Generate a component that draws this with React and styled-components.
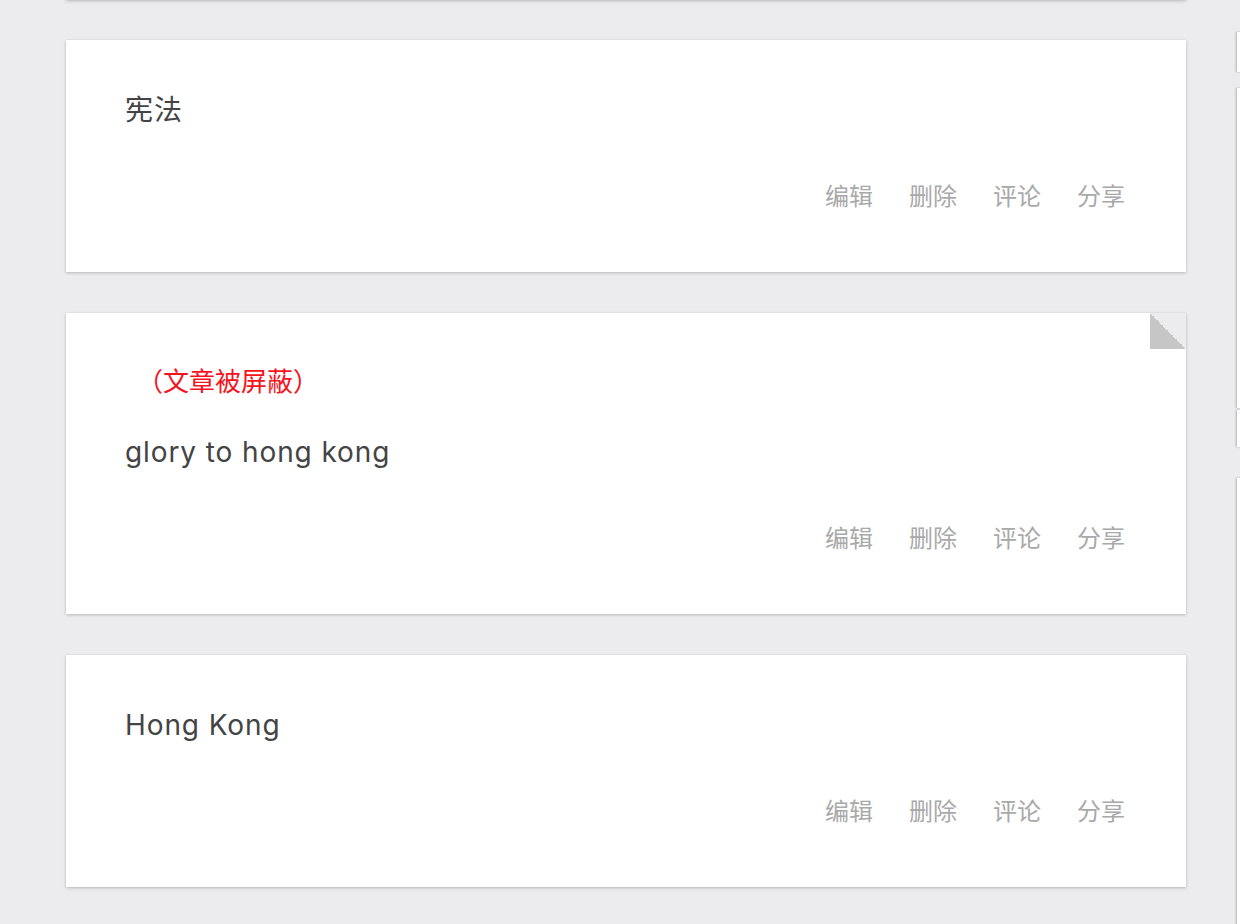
import React from 'react';
import styled, { createGlobalStyle } from 'styled-components';

const GlobalStyle = createGlobalStyle`
    html, body
    {
        margin: 0;
        padding: 0;
        background: #ececee;
        font-family: Inter, "Noto Sans CJK SC", sans-serif;
        overflow: hidden;
    }
`;

const Page = styled.div`
    display: flex;
    align-items: flex-start;
    gap: 51px;
    padding-left: 66px;
    height: 924px;
    overflow: hidden;
`;

const List = styled.div`
    width: 1120px;
    flex-shrink: 0;
    display: flex;
    flex-direction: column;
    gap: 41px;
`;

const Stub = styled.div`
    height: 80px;
    margin-top: -81px;
    background: #fff;
    box-shadow: 0 1px 4px rgba(0, 0, 0, 0.35);
`;

const Card = styled.div`
    position: relative;
    background: #fff;
    padding: 49px 61px 57px 59px;
    box-shadow: 0 1px 3px rgba(0, 0, 0, 0.22), 0 0 1px rgba(0, 0, 0, 0.08);
`;

const Fold = styled.div`
    position: absolute;
    top: 0;
    right: 0;
    width: 36px;
    height: 36px;
    background: linear-gradient(to bottom left, #ececee 50%, #c6c6c6 50%);
`;

const Blocked = styled.div`
    font-size: 26px;
    line-height: 40px;
    color: #f5141e;
    margin-left: 12px;
    margin-bottom: 29px;
`;

const Title = styled.div`
    font-size: 28px;
    line-height: 42px;
    letter-spacing: 0.9px;
    color: #444;
`;

const Actions = styled.div`
    display: flex;
    justify-content: flex-end;
    gap: 36px;
    margin-top: 48px;
`;

const Action = styled.span`
    font-size: 24px;
    line-height: 36px;
    color: #a9a9a9;
    cursor: pointer;
`;

const Side = styled.div`
    display: flex;
    flex-direction: column;
    width: 300px;
    flex-shrink: 0;
`;

const SideCard = styled.div`
    height: ${p => p.h}px;
    margin-top: ${p => p.top}px;
    background: #fff;
    box-shadow: -1px 0 2px rgba(0, 0, 0, 0.25);
`;

const posts = [
    { title: '宪法' },
    { title: 'glory to hong kong', blocked: true },
    { title: 'Hong Kong' },
];

const actions = ['编辑', '删除', '评论', '分享'];

const sideCards = [
    { top: 32, h: 40 },
    { top: 16, h: 320 },
    { top: 2, h: 37 },
    { top: 31, h: 460 },
];

const App = () =>
{
    return (
        <>
            <GlobalStyle />
            <Page>
                <List>
                    <Stub />
                    {posts.map((x, y) => (
                        <Card key={y}>
                            {x.blocked && <Fold />}
                            {x.blocked && <Blocked>（文章被屏蔽）</Blocked>}
                            <Title>{x.title}</Title>
                            <Actions>
                                {actions.map(a => (
                                    <Action key={a}>{a}</Action>
                                ))}
                            </Actions>
                        </Card>
                    ))}
                </List>
                <Side>
                    {sideCards.map((c, i) => (
                        <SideCard key={i} top={c.top} h={c.h} />
                    ))}
                </Side>
            </Page>
        </>
    );
};

export default App;
